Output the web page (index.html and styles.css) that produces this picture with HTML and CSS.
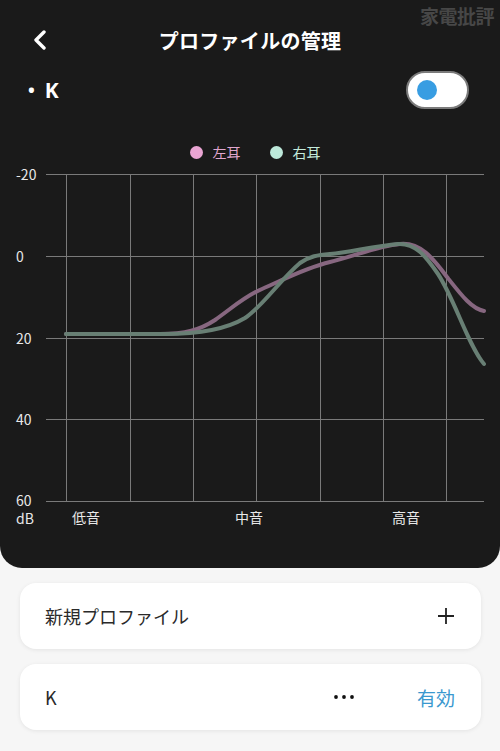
FILE: index.html
```html
<!DOCTYPE html>
<html lang="ja">
<head>
<meta charset="utf-8">
<link rel="stylesheet" href="styles.css">
</head>
<body>
<div class="panel">
  <div class="watermark">家電批評</div>
  <div class="topbar">
    <svg class="back" width="16" height="20" viewBox="0 0 16 20"><path d="M12 2 L4 10 L12 18" fill="none" stroke="#fff" stroke-width="3.4" stroke-linecap="round" stroke-linejoin="round"/></svg>
    <div class="title">プロファイルの管理</div>
    <div></div>
  </div>
  <div class="profile">
    <div class="name"><span class="bullet">•</span>K</div>
    <div class="toggle"><span class="knob"></span></div>
  </div>
  <div class="legend">
    <span class="item left"><span class="dot"></span>左耳</span>
    <span class="item right"><span class="dot"></span>右耳</span>
  </div>
  <svg class="chart" width="500" height="404" viewBox="0 164 500 404">
    <g class="grid">
      <line x1="46" y1="174.5" x2="484" y2="174.5"/>
      <line x1="46" y1="256.5" x2="484" y2="256.5"/>
      <line x1="46" y1="338.5" x2="484" y2="338.5"/>
      <line x1="46" y1="419.5" x2="484" y2="419.5"/>
      <line x1="46" y1="501.5" x2="484" y2="501.5"/>
      <line x1="66.5" y1="174" x2="66.5" y2="502"/>
      <line x1="130.5" y1="174" x2="130.5" y2="502"/>
      <line x1="193.5" y1="174" x2="193.5" y2="502"/>
      <line x1="256.5" y1="174" x2="256.5" y2="502"/>
      <line x1="320.5" y1="174" x2="320.5" y2="502"/>
      <line x1="383.5" y1="174" x2="383.5" y2="502"/>
      <line x1="446.5" y1="174" x2="446.5" y2="502"/>
    </g>
    <g class="ylab">
      <text x="16" y="180">-20</text>
      <text x="16" y="262">0</text>
      <text x="16" y="344">20</text>
      <text x="16" y="425">40</text>
      <text x="16" y="506">60</text>
      <text x="16" y="524">dB</text>
    </g>
    <g class="xlab">
      <text x="72" y="523">低音</text>
      <text x="235" y="523">中音</text>
      <text x="392" y="523">高音</text>
    </g>
    <path class="curve pink" d="M66 334 L160 334 C185 334 200 330 215 320 C232 308 245 296 262 289 C285 279 305 268 330 262 C355 256 378 246 400 244 C420 242 433 258 447 277 C462 296 472 309 484 311"/>
    <path class="curve green" d="M66 334 L165 334 C195 334 225 330 245 318 C262 307 280 280 300 263 C310 256 318 255 330 254 C350 252 375 246 398 244 C415 243 425 255 438 274 C455 300 468 345 484 364"/>
  </svg>
</div>
<div class="cards">
  <div class="card">
    <span class="label">新規プロファイル</span>
    <svg class="plus" width="18" height="18" viewBox="0 0 18 18"><path d="M9 1 V17 M1 9 H17" stroke="#222" stroke-width="1.8"/></svg>
  </div>
  <div class="card">
    <span class="label">K</span>
    <svg class="dots" width="22" height="6" viewBox="0 0 22 6"><circle cx="3" cy="3" r="1.9"/><circle cx="11" cy="3" r="1.9"/><circle cx="19" cy="3" r="1.9"/></svg>
    <span class="active">有効</span>
  </div>
</div>
</body>
</html>
```
FILE: styles.css
```css
* { box-sizing: border-box; }
html, body { margin: 0; padding: 0; }
body {
  width: 500px;
  height: 751px;
  overflow: hidden;
  background: #f6f6f6;
  font-family: "Noto Sans CJK JP", "Noto Sans", sans-serif;
}
.panel {
  position: relative;
  height: 568px;
  background: #1a1a1a;
  border-radius: 0 0 22px 22px;
  color: #fff;
}
.watermark {
  position: absolute;
  top: 2px;
  right: 6px;
  font-size: 19px;
  font-weight: 700;
  color: #474747;
  letter-spacing: -0.5px;
}
.topbar {
  height: 70px;
  padding-top: 10px;
  display: grid;
  grid-template-columns: 1fr auto 1fr;
  align-items: center;
}
.back { margin-left: 32px; display: block; }
.title {
  font-size: 20px;
  font-weight: 700;
  letter-spacing: 0.3px;
}
.profile {
  height: 40px;
  display: flex;
  align-items: center;
  justify-content: space-between;
  padding: 0 31px 0 28px;
}
.name {
  font-family: "Noto Sans", sans-serif;
  font-size: 21px;
  font-weight: 700;
  display: flex;
  align-items: center;
}
.bullet { font-size: 18px; margin-right: 10px; }
.toggle {
  width: 63px;
  height: 38px;
  border: 2.5px solid #7b7b7b;
  border-radius: 19px;
  background: #fff;
  display: flex;
  align-items: center;
  padding-left: 9px;
}
.knob {
  width: 20px;
  height: 20px;
  border-radius: 50%;
  background: #389de2;
}
.legend {
  margin-top: 30px;
  height: 24px;
  display: flex;
  justify-content: center;
  align-items: center;
  gap: 29px;
  font-size: 14px;
  padding-left: 10px;
}
.item { display: flex; align-items: center; gap: 10px; }
.dot { width: 13px; height: 13px; border-radius: 50%; }
.left { color: #e0a6cf; }
.left .dot { background: #eaa5d3; }
.right { color: #c4ebdc; }
.right .dot { background: #bde9da; }
.chart { display: block; }
.grid line { stroke: #7a7a7a; stroke-width: 1; }
.ylab text, .xlab text {
  fill: #e8e8e8;
  font-size: 14px;
  font-family: "Noto Sans CJK JP", "Noto Sans", sans-serif;
}
.curve { fill: none; stroke-width: 4; stroke-linecap: round; stroke-linejoin: round; }
.pink { stroke: #876780; }
.green { stroke: #687f74; }
.cards {
  padding: 15px 19px 0 20px;
  display: flex;
  flex-direction: column;
  gap: 15px;
}
.card {
  height: 66px;
  background: #fff;
  border-radius: 16px;
  box-shadow: 0 1px 4px rgba(0,0,0,0.08);
  display: flex;
  align-items: center;
  padding: 0 26px 0 25px;
  font-size: 18px;
  color: #2a2a2a;
}
.card .label { flex: 1; }
.plus { display: block; }
.dots { display: block; fill: #111; margin-right: 62px; }
.active { color: #3a98cf; font-size: 19px; }
```
